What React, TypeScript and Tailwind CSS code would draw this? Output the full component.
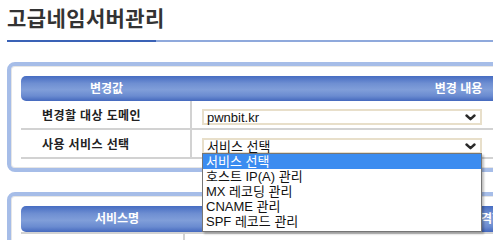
import React from "react";

const Chevron = () => (
  <svg width="11" height="7" viewBox="0 0 11 7" className="shrink-0">
    <polyline points="1.5,1.5 5.5,5.2 9.5,1.5" fill="none" stroke="#2a2a2a" strokeWidth="2.4" strokeLinecap="round" strokeLinejoin="round" />
  </svg>
);

const headerBg =
  "bg-[linear-gradient(to_bottom,#466cc2_0%,#6f8fd2_30%,#809ed9_55%,#6a8bd0_80%,#4569be_100%)]";

export default function App() {
  const items = ["서비스 선택", "호스트 IP(A) 관리", "MX 레코딩 관리", "CNAME 관리", "SPF 레코드 관리"];
  return (
    <div className="w-screen h-screen overflow-hidden bg-white font-['Liberation_Sans','Noto_Sans_CJK_KR',sans-serif]">
      <div className="w-[800px] pl-[7px] pt-[6px]">
        <h1 className="text-[21px] font-bold leading-[25px] text-[#333] tracking-[0.4px]">고급네임서버관리</h1>
        <div className="flex h-[2px] mt-[9px] w-[760px]">
          <div className="w-[149px] bg-[#3a62b6]" />
          <div className="flex-1 bg-[#8fa9dc]" />
        </div>

        {/* Box 1 */}
        <div className="mt-[20px] w-[740px] border-4 border-[#a6bde8] rounded-[8px] bg-white shadow-[inset_0_0_0_1px_#e6e6e6] px-[10px] pt-[10px] pb-[9px]">
          <div className={`flex h-[25px] items-center rounded-[5px] ${headerBg} text-white text-[12px] font-bold`}>
            <div className="w-[171px] text-center">변경값</div>
            <div className="flex-1 text-center pr-[8px]">변경 내용</div>
          </div>
          <div className="flex h-[29px] border-b-2 border-[#d2d2d2]">
            <div className="w-[171px] border-r-2 border-[#d2d2d2] pl-[21px] pt-[2px] flex items-center text-[12px] font-bold text-[#222] tracking-[0.4px]">
              변경할 대상 도메인
            </div>
            <div className="flex-1 pl-[10px] pt-[8px]">
              <div className="w-[280px] h-[16px] border-2 border-[#e8dfca] flex items-center justify-between pl-[3px] pr-[4px] text-[13px] leading-none text-[#111]">
                <span>pwnbit.kr</span>
                <Chevron />
              </div>
            </div>
          </div>
          <div className="flex h-[29px] border-b-2 border-[#d2d2d2]">
            <div className="w-[171px] border-r-2 border-[#d2d2d2] pl-[21px] pt-[2px] flex items-center text-[12px] font-bold text-[#222] tracking-[0.4px]">
              사용 서비스 선택
            </div>
            <div className="flex-1 pl-[10px] pt-[8px]">
              <div className="relative w-[280px] h-[16px] border-2 border-[#e8dfca] flex items-center justify-between pl-[3px] pr-[4px] text-[13px] leading-none text-[#111]">
                <span>서비스 선택</span>
                <Chevron />
                <div className="absolute left-[-2px] top-[13px] w-[280px] z-10 border border-[#767676] bg-white shadow-[2px_2px_2px_rgba(0,0,0,0.25)] pb-[2px]">
                  {items.map((t, i) => (
                    <div
                      key={t}
                      className={`h-[15px] leading-[15px] pl-[3px] text-[13px] ${i === 0 ? "bg-[#3b8cf0] text-white" : "text-[#111]"}`}
                    >
                      {t}
                    </div>
                  ))}
                </div>
              </div>
            </div>
          </div>
        </div>

        {/* Box 2 */}
        <div className="mt-[20px] w-[740px] border-4 border-[#a6bde8] rounded-[8px] bg-white shadow-[inset_0_0_0_1px_#e6e6e6] px-[10px] pt-[10px] pb-[9px]">
          <div className={`flex h-[26px] items-center rounded-[5px] ${headerBg} text-white text-[12px] font-bold`}>
            <div className="w-[192px] text-center">서비스명</div>
            <div className="w-[256px] text-center">서비스 내용</div>
            <div className="flex-1 pl-[1px]">가격합계</div>
          </div>
          <div className="flex h-[30px] border-t-2 border-[#d2d2d2]">
            <div className="w-[164px] border-r-2 border-[#d2d2d2]" />
            <div className="flex-1" />
          </div>
        </div>
      </div>
    </div>
  );
}
